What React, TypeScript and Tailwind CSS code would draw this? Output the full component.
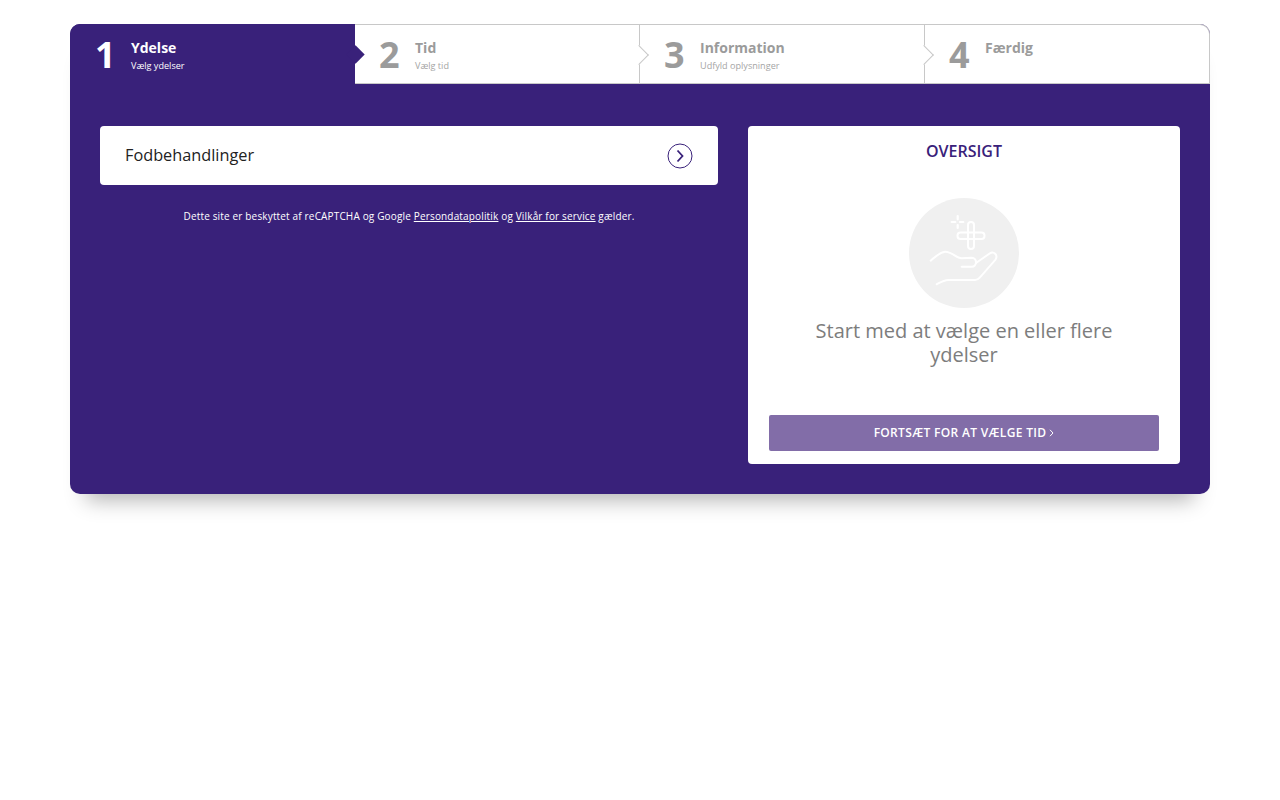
const steps = [
  { n: "1", title: "Ydelse", sub: "Vælg ydelser" },
  { n: "2", title: "Tid", sub: "Vælg tid" },
  { n: "3", title: "Information", sub: "Udfyld oplysninger" },
  { n: "4", title: "Færdig", sub: "" },
];

function HandIcon() {
  return (
    <svg width="110" height="110" viewBox="0 0 110 110" fill="none" stroke="#ffffff" strokeWidth="2" strokeLinecap="round" strokeLinejoin="round">
      <path d="M48.700 18v3.300M48.700 27v3M42.700 24h3.600M51 24h3.300" strokeWidth="2.200" />
      <rect x="59" y="24" width="6" height="27" rx="3" />
      <rect x="48.500" y="34.500" width="27" height="6.500" rx="3" />
      <path d="M21.700 62.700C26 59 30.500 54.300 36 53.700C42 53.200 47 59.800 52.700 60.300L62.700 59.700C65.500 59.700 67 62 67 64.300C67 66.800 65.200 68.700 62.700 68.700H52.700" />
      <path d="M67 65L81 55.300C83 54 85.500 54.700 86.700 56.300C87.700 58 87.500 60.300 86.300 61.800L71 79.300C69.500 81 68 82 66 82H39.300C35 82 31 84.500 27.700 86.300" />
    </svg>
  );
}

export default function App() {
  return (
    <div className="min-h-[800px] bg-white pt-6 font-['Open_Sans',sans-serif]">
      <div className="mx-auto w-[1140px] rounded-[10px] bg-[#39217a] shadow-[0_22px_20px_-16px_rgba(0,0,0,0.3)]">
        <div className="flex h-[60px]">
          {steps.map((s, i) => {
            const active = i === 0;
            return (
              <div
                key={s.n}
                className={
                  active
                    ? "relative flex h-[60px] w-[285px] rounded-tl-[10px] bg-[#39217a] pl-[25px]"
                    : i === 3
                      ? "relative flex h-[60px] w-[285px] rounded-tr-[10px] border-y border-r border-[#c8c8c8] bg-white pl-[24px]"
                      : "relative flex h-[60px] w-[285px] border-y border-r border-[#c8c8c8] bg-white pl-[24px]"
                }
              >
                <div className={active ? "mt-[9px] w-[36px] text-[36px] leading-[44px] font-bold text-white" : "mt-[8px] w-[36px] text-[36px] leading-[44px] font-bold text-[#9b9b9b]"}>
                  {s.n}
                </div>
                <div className={active ? "mt-[14px]" : "mt-[13px]"}>
                  <div className={active ? "text-[14px] leading-[19px] font-bold text-white" : "text-[14px] leading-[19px] font-bold text-[#9b9b9b]"}>{s.title}</div>
                  <div className={active ? "mt-[2px] text-[9.100px] leading-[14px] text-white" : "mt-[2px] text-[9.100px] leading-[14px] text-[#a5a5a5]"}>{s.sub}</div>
                </div>
                {active && <div className="absolute top-[24px] left-[279px] z-10 h-[13px] w-[13px] rotate-45 bg-[#39217a]" />}
                {!active && i < 3 && (
                  <div className="absolute top-[23px] left-[277px] z-10 h-[14px] w-[14px] rotate-45 border-t border-r border-[#c8c8c8] bg-white" />
                )}
              </div>
            );
          })}
        </div>
        <div className="flex gap-[30px] px-[30px] pt-[42px] pb-[30px]">
          <div className="w-[618px]">
            <div className="flex h-[59px] items-center justify-between rounded-[4px] bg-white pr-[25px] pl-[25px]">
              <span className="text-[16.300px] text-[#222222]">Fodbehandlinger</span>
              <svg width="26" height="26" viewBox="0 0 26 26" fill="none" stroke="#39217a">
                <circle cx="13" cy="13" r="12" strokeWidth="1" />
                <path d="M10.500 7.500L15.500 13L10.500 18.500" strokeWidth="1.800" />
              </svg>
            </div>
            <p className="mt-[24px] text-center text-[10px] leading-[14px] tracking-[0.16px] text-white">
              Dette site er beskyttet af reCAPTCHA og Google <a className="underline">Persondatapolitik</a> og <a className="underline">Vilkår for service</a> gælder.
            </p>
          </div>
          <div className="flex h-[338px] w-[432px] flex-col items-center rounded-[4px] bg-white px-[21px] pt-[14px]">
            <div className="text-[16px] leading-[22px] font-semibold text-[#39217a]">OVERSIGT</div>
            <div className="mt-[36px] flex h-[110px] w-[110px] items-center justify-center rounded-full bg-[#f0f0f0]">
              <HandIcon />
            </div>
            <div className="mt-[11px] w-[340px] text-center text-[20px] leading-[24px] font-medium text-[#7d7d7d]">
              Start med at vælge en eller flere ydelser
            </div>
            <button className="mt-[48px] flex h-[36px] w-[390px] items-center justify-center gap-[3px] rounded-[2px] bg-[#826da8] text-[12px] font-semibold tracking-[0.33px] text-white">
              FORTSÆT FOR AT VÆLGE TID
              <svg width="5" height="8" viewBox="0 0 5 8" fill="none" stroke="#ffffff" strokeWidth="1">
                <path d="M1 .8L4 4L1 7.200" />
              </svg>
            </button>
          </div>
        </div>
      </div>
    </div>
  );
}
